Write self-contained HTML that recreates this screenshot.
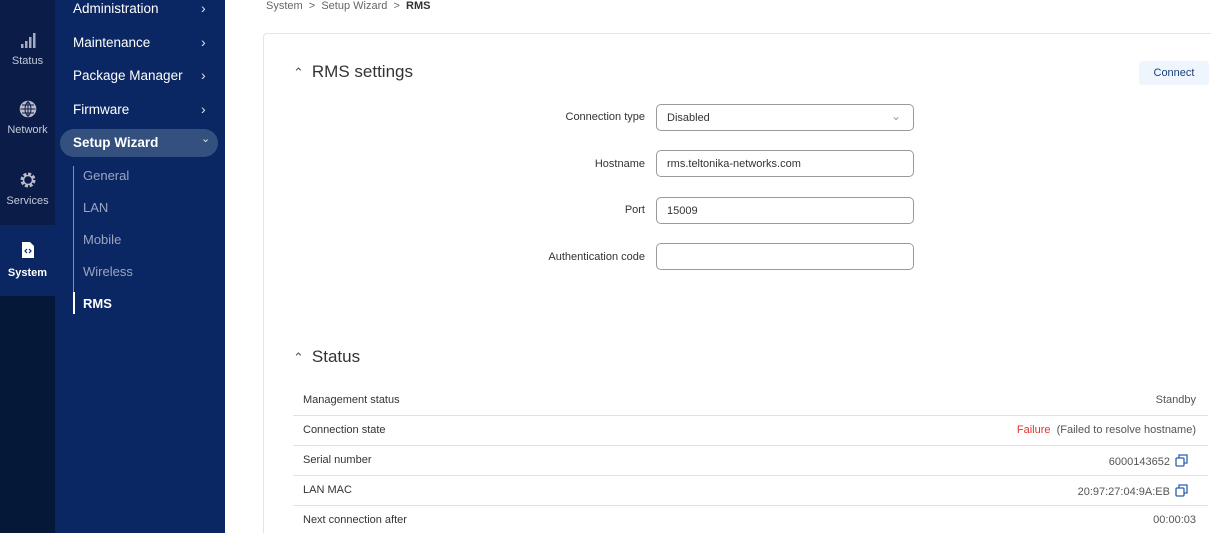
<!DOCTYPE html>
<html><head><meta charset="utf-8"><style>
*{box-sizing:border-box;margin:0;padding:0}
html{width:1211px;height:533px;overflow:hidden}
body{width:1211px;height:533px;overflow:hidden;background:#fff;font-family:"Liberation Sans",sans-serif;position:relative}
.rail{position:absolute;left:0;top:0;width:55px;height:533px;background:#0a1c47}
.rail .it{position:absolute;left:0;width:55px;text-align:center;color:#c4cad6;font-size:11px}
.rail .act{background:#0b2763;color:#fff;font-weight:bold}
.side{position:absolute;left:55px;top:0;width:170px;height:533px;background:#0b2763}
.m{position:absolute;left:18px;color:#fff;font-size:13.5px}
.chev{position:absolute;left:146px;color:#dfe4ee;font-size:14px}
.pill{position:absolute;left:5px;top:129px;width:158px;height:28px;border-radius:14px;background:#33507f}
.sub{position:absolute;left:28px;color:#9aa6bd;font-size:13px}
.vline{position:absolute;left:18px;top:166px;width:1px;height:148px;background:#8090b0}
.crumb{position:absolute;left:266px;top:0px;font-size:11px;color:#666}
.card{position:absolute;left:263px;top:33px;width:960px;height:510px;border:1px solid #e3e3e3;border-radius:4px}
h2{position:absolute;font-size:17px;font-weight:normal;color:#333}
.lbl{position:absolute;right:566px;font-size:11px;color:#333;text-align:right}
.inp{position:absolute;left:656px;width:258px;height:27px;border:1px solid #9a9a9a;border-radius:5px;font-size:11px;color:#333;padding:7px 10px}
.row{position:absolute;left:293px;width:915px;height:30px;border-bottom:1px solid #e2e2e2;font-size:11px;color:#333}
.row span{position:absolute;top:8px}
.row .l{left:10px}.row .r{right:12px;color:#555}
.btn{position:absolute;left:1139px;top:61px;width:70px;height:24px;background:#eef5fd;border-radius:3px;color:#1c3f7a;font-size:11px;text-align:center;line-height:24px}
</style></head><body>
<div class="rail">
 <div class="it" style="top:31px"><svg width="18" height="18" viewBox="0 0 18 18"><rect x="2" y="13" width="2.5" height="4" fill="#aab"/><rect x="6" y="10" width="2.5" height="7" fill="#aab"/><rect x="10" y="6" width="2.5" height="11" fill="#aab"/><rect x="14" y="2" width="2.5" height="15" fill="#aab"/></svg><div style="margin-top:3px">Status</div></div>
 <div class="it" style="top:100px"><svg width="18" height="18" viewBox="0 0 18 18" fill="none" stroke="#bbc" stroke-width="1.6"><circle cx="9" cy="9" r="7.5" fill="#bbc"/><path d="M1.5 9h15M9 1.5v15M3 5h12M3 13h12M9 1.5c-4 4-4 11 0 15M9 1.5c4 4 4 11 0 15" stroke="#0a1c47" stroke-width="1"/></svg><div style="margin-top:3px">Network</div></div>
 <div class="it" style="top:171px"><svg width="18" height="18" viewBox="0 0 18 18"><circle cx="9" cy="9" r="6" fill="none" stroke="#bbc" stroke-width="3" stroke-dasharray="3 1.7"/><circle cx="9" cy="9" r="4.5" fill="none" stroke="#bbc" stroke-width="1.5"/></svg><div style="margin-top:3px">Services</div></div>
 <div class="it act" style="top:225px;height:71px;padding-top:16px"><svg width="14" height="18" viewBox="0 0 14 18"><path d="M1 1h8l4 4v12H1z" fill="#fff"/><path d="M6 8l-2 2 2 2M8 8l2 2-2 2" stroke="#0b2763" stroke-width="1.2" fill="none"/></svg><div style="margin-top:5px">System</div></div>
 <div style="position:absolute;top:296px;left:0;width:55px;height:237px;background:#061838"></div>
</div>
<div class="side">
 <div class="m" style="top:1px">Administration</div><div class="chev" style="top:0px">›</div>
 <div class="m" style="top:35px">Maintenance</div><div class="chev" style="top:34px">›</div>
 <div class="m" style="top:68px">Package Manager</div><div class="chev" style="top:67px">›</div>
 <div class="m" style="top:102px">Firmware</div><div class="chev" style="top:101px">›</div>
 <div class="pill"></div>
 <div class="m" style="top:135px;font-weight:bold">Setup Wizard</div><div class="chev" style="top:132px;font-size:11px">⌄</div>
 <div class="vline"></div>
 <div class="sub" style="top:168px">General</div>
 <div class="sub" style="top:200px">LAN</div>
 <div class="sub" style="top:232px">Mobile</div>
 <div class="sub" style="top:264px">Wireless</div>
 <div class="sub" style="top:296px;color:#fff;font-weight:bold">RMS</div>
 <div style="position:absolute;left:18px;top:292px;width:2px;height:22px;background:#fff"></div>
</div>
<div class="crumb">System &nbsp;&gt;&nbsp; Setup Wizard &nbsp;&gt;&nbsp; <b style="color:#333">RMS</b></div>
<div class="card"></div>
<h2 style="left:293px;top:62px"><span style="font-size:13px;color:#555;margin-right:8px">⌃</span>RMS settings</h2>
<div class="btn">Connect</div>
<div class="lbl" style="top:111px">Connection type</div>
<div class="inp" style="top:104px">Disabled<span style="position:absolute;right:12px;top:4px;color:#999;font-size:12px">⌄</span></div>
<div class="lbl" style="top:158px">Hostname</div>
<div class="inp" style="top:150px">rms.teltonika-networks.com</div>
<div class="lbl" style="top:204px">Port</div>
<div class="inp" style="top:197px">15009</div>
<div class="lbl" style="top:251px">Authentication code</div>
<div class="inp" style="top:243px"></div>
<h2 style="left:293px;top:347px"><span style="font-size:13px;color:#555;margin-right:8px">⌃</span>Status</h2>
<div class="row" style="top:386px"><span class="l">Management status</span><span class="r">Standby</span></div>
<div class="row" style="top:416px"><span class="l">Connection state</span><span class="r"><span style="position:static;color:#e0352b">Failure</span>&nbsp; (Failed to resolve hostname)</span></div>
<div class="row" style="top:446px"><span class="l">Serial number</span><span class="r" style="right:20px">6000143652 <svg width="13" height="13" viewBox="0 0 13 13" style="vertical-align:-2px;margin-left:2px" fill="none" stroke="#2b5fb0" stroke-width="1.3"><rect x="1" y="4" width="8" height="8" rx="1"/><path d="M4 4V1h8v8H9"/></svg></span></div>
<div class="row" style="top:476px"><span class="l">LAN MAC</span><span class="r" style="right:20px">20:97:27:04:9A:EB <svg width="13" height="13" viewBox="0 0 13 13" style="vertical-align:-2px;margin-left:2px" fill="none" stroke="#2b5fb0" stroke-width="1.3"><rect x="1" y="4" width="8" height="8" rx="1"/><path d="M4 4V1h8v8H9"/></svg></span></div>
<div class="row" style="top:506px;border:none"><span class="l">Next connection after</span><span class="r">00:00:03</span></div>
</body></html>
